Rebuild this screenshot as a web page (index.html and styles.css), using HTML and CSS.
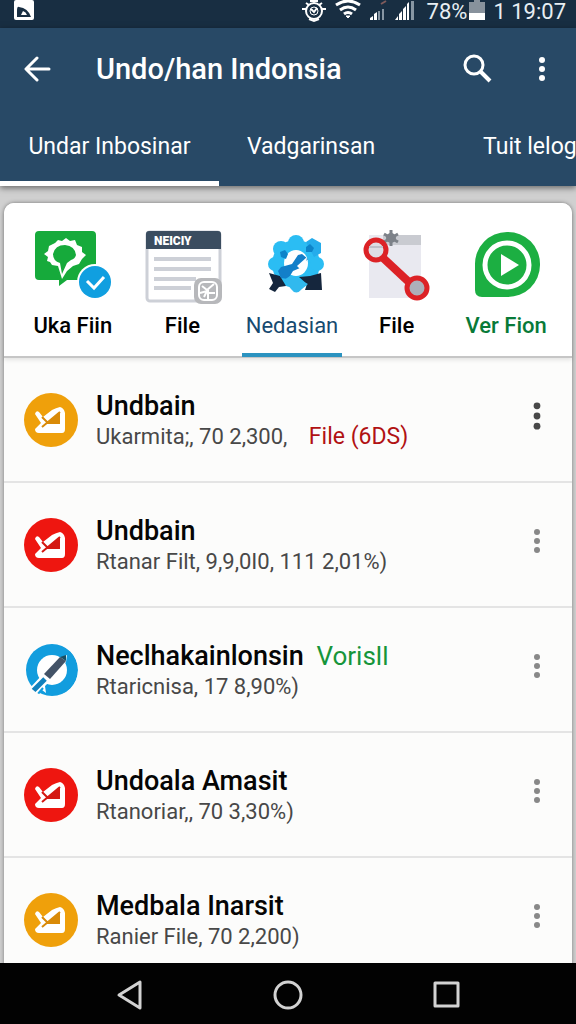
FILE: index.html
```html
<!DOCTYPE html>
<html lang="id">
<head>
    <meta charset="UTF-8">
    <meta name="viewport" content="width=device-width, initial-scale=1.0">
    <title>Undo/han Indonsia</title>
    <link rel="stylesheet" href="styles.css">
</head>
<body>

<!-- Shared icon shapes -->
<svg class="symbols" aria-hidden="true">
    <symbol id="mark" viewBox="0 0 54 54">
        <path d="M11 21 Q12 17 15 19 L19 24 L28 17 Q32 15 36 14 Q40 15 41 20 V36 Q41 40 38 40 H15 Q11 40 11 36 L17 30Z" fill="#fff"/>
        <path d="M36 19 V31 H22Z" fill="currentColor"/>
        <path d="M36 19 L18 34 M18 24 L23 29" fill="none" stroke="currentColor" stroke-width="2"/>
    </symbol>
    <symbol id="dots" viewBox="0 0 10 30">
        <circle cx="5" cy="6" r="3"/>
        <circle cx="5" cy="15" r="3"/>
        <circle cx="5" cy="24" r="3"/>
    </symbol>
</svg>

<div class="status-bar">
    <svg width="20" height="20" viewBox="0 0 20 20">
        <rect width="20" height="20" rx="2" fill="#fff"/>
        <path d="M3 17 V11 Q3 6 5 7 Q14 8 17 17Z" fill="#182e42"/>
        <path d="M7 15 L9 11 Q12 12 13 15Z" fill="#fff"/>
    </svg>
    <div class="status-right">
        <svg width="26" height="24" viewBox="0 0 26 24" fill="none" stroke="#fff" stroke-width="2">
            <circle cx="13" cy="11" r="8"/>
            <circle cx="13" cy="11" r="4" stroke-width="1"/>
            <path d="M5 3 L8 5 M21 3 L18 5 M1 9 H5 M21 9 H25 M9 1 H17 M8 19 L13 21 L18 19 M10 9 L13 12 L16 8"/>
        </svg>
        <svg width="26" height="20" viewBox="0 0 26 20" fill="none" stroke="#fff" stroke-width="3">
            <path d="M1 5 Q13 -3 25 5"/>
            <path d="M5 10 Q13 4 21 10"/>
            <path d="M9 14 Q13 11 17 14"/>
            <path d="M11 16 L13 18 L15 16Z" fill="#fff" stroke-width="1"/>
        </svg>
        <svg width="18" height="22" viewBox="0 0 18 22" fill="#fff">
            <path d="M1 20 V18 L4 16 V20Z M5 20 V14 L8 12 V20Z"/>
            <path d="M9 20 V11 H11 V20Z M13 20 V9 H15 V20Z" fill="#8796a3"/>
            <path d="M12 4 L17 1" stroke="#815b5b" stroke-width="2"/>
        </svg>
        <svg width="20" height="22" viewBox="0 0 20 22" fill="#fff">
            <path d="M0 20 L3 16 V20Z M4 20 V14 L7 11 V20Z M8 20 V9 L11 6 V20Z M12 20 V4 L14 2 V20Z"/>
            <path d="M16 1 H19 V20 H16Z" fill="#8796a3"/>
        </svg>
        <span class="battery-text">78%</span>
        <svg width="16" height="20" viewBox="0 0 16 20">
            <path d="M5 0 H11 V2 H16 V20 H0 V2 H5Z" fill="#88929c"/>
            <path d="M0 13 H16 V20 H0Z" fill="#fff"/>
        </svg>
        <span>1 19:07</span>
    </div>
</div>

<header class="header">
    <div class="app-bar">
        <button class="icon-btn" aria-label="Back">
            <svg width="28" height="28" viewBox="0 0 28 28" fill="none" stroke="#fff" stroke-width="3" stroke-linecap="round" stroke-linejoin="round">
                <path d="M25 14 H3 M13 3 L2 14 L13 25"/>
            </svg>
        </button>
        <h1>Undo/han Indonsia</h1>
        <button class="icon-btn" aria-label="Search">
            <svg width="30" height="30" viewBox="0 0 30 30" fill="none" stroke="#fff" stroke-width="3">
                <circle cx="11" cy="11" r="9"/>
                <path d="M17 17 L27 27" stroke-width="4"/>
            </svg>
        </button>
        <button class="icon-btn" aria-label="More">
            <svg width="10" height="30" fill="#fff"><use href="#dots"/></svg>
        </button>
    </div>
    <nav class="tabs">
        <button class="tab active">Undar Inbosinar</button>
        <button class="tab">Vadgarinsan</button>
        <button class="tab last">Tuit lelog</button>
    </nav>
</header>

<main>
    <div class="card">
        <nav class="shortcuts">
            <button class="shortcut">
                <svg width="80" height="80" viewBox="0 0 80 80">
                    <path d="M6 3 H59 Q63 3 63 7 V48 Q63 52 59 52 H34 L26 58 V52 H6 Q2 52 2 48 V7 Q2 3 6 3Z" fill="#16aa3b"/>
                    <path d="M22 15 L25 12 L29 13 L33 10 L37 13 L42 12 L44 17 L49 19 L49 24 L53 27 L49 31 L46 36 L40 38 L34 43 L29 51 L25 38 L19 37 L17 34 L14 33 L15 29 L11 26 L15 23 L16 18Z" fill="#fff"/>
                    <path d="M20 26 Q22 17 32 17 Q42 18 43 27 Q42 31 38 32 L34 35 L29 46 L27 35 Q20 33 20 26Z" fill="#16aa3b"/>
                    <circle cx="62" cy="54" r="18" fill="#fff"/>
                    <circle cx="62" cy="54" r="16" fill="#109fe0"/>
                    <path d="M54 53 L61 60 L71 49" fill="none" stroke="#fff" stroke-width="3"/>
                </svg>
                <span>Uka Fiin</span>
            </button>
            <button class="shortcut">
                <svg width="80" height="80" viewBox="0 0 80 80">
                    <rect x="5" y="4" width="73" height="69" rx="3" fill="#fff" stroke="#cdd0d7" stroke-width="3"/>
                    <path d="M7 3 H76 Q79 3 79 6 V21 H4 V6 Q4 3 7 3Z" fill="#3b4d60"/>
                    <text x="12" y="17" class="paper-title">NEICIY</text>
                    <path d="M12 31 H69 M12 41 H69 M12 51 H54 M12 60 H49" stroke="#cdd0d7" stroke-width="4"/>
                    <rect x="52" y="50" width="28" height="26" rx="7" fill="#b7b8bb"/>
                    <rect x="57" y="54" width="18" height="18" rx="5" fill="#b7b8bb" stroke="#fff" stroke-width="2"/>
                    <path d="M60 58 L65 62 L72 56 M66 62 V71 M58 65 L65 63 L62 69 M67 65 H73" fill="none" stroke="#fff" stroke-width="2"/>
                </svg>
                <span>File</span>
            </button>
            <button class="shortcut selected">
                <svg width="80" height="80" viewBox="0 0 80 80">
                    <g fill="#2bbdf3">
                        <circle cx="44" cy="36" r="24"/>
                        <circle cx="44" cy="15" r="8"/>
                        <circle cx="29" cy="21" r="8"/>
                        <circle cx="59" cy="21" r="8"/>
                        <circle cx="23" cy="36" r="7"/>
                        <circle cx="65" cy="36" r="7"/>
                    </g>
                    <path d="M54 14 L60 10 L69 15 V25 L62 29Z" fill="#25aceb"/>
                    <path d="M17 45 L28 48 L34 58 L27 59 L23 64 L17 61 L21 55Z" fill="#15263d"/>
                    <path d="M69 45 L70 62 H53 L55 56 L47 49 L58 48Z" fill="#15263d"/>
                    <ellipse cx="44" cy="35" rx="12" ry="13" fill="#fff"/>
                    <path d="M28 24 L33 22 L36 26 L34 31 L29 29Z" fill="#0d84c9"/>
                    <path d="M54 19 L58 16 L62 20 L60 24 L54 24Z" fill="#0d84c9"/>
                    <path d="M46 27 L50 26 L56 31 L48 40 L41 43 L36 51 L29 50 L26 43 L29 39 L40 36Z" fill="#137fc9"/>
                    <path d="M45 38 L55 29 L54 36 L48 41Z" fill="#fff"/>
                    <path d="M32 52 L38 48 L46 51 L56 56 L50 61 Q44 68 39 61Z" fill="#31b9ee"/>
                </svg>
                <span>Nedasian</span>
            </button>
            <button class="shortcut">
                <svg width="80" height="80" viewBox="0 0 80 80">
                    <rect x="12" y="7" width="52" height="63" fill="#e9e9f0"/>
                    <rect x="26" y="7" width="38" height="10" fill="#c9cbd1"/>
                    <circle cx="34" cy="10" r="5" fill="#7d8289"/>
                    <path d="M34 2 V18 M27 6 L41 14 M41 6 L27 14" stroke="#7d8289" stroke-width="3"/>
                    <path d="M24 28 L54 56" stroke="#dc2226" stroke-width="8"/>
                    <circle cx="19" cy="22" r="10" fill="#dedee5" stroke="#dc2226" stroke-width="5"/>
                    <path d="M12 19 H26" stroke="#bfc0c9" stroke-width="2"/>
                    <circle cx="60" cy="60" r="10" fill="#adb0ba" stroke="#dc2226" stroke-width="5"/>
                </svg>
                <span>File</span>
            </button>
            <button class="shortcut green">
                <svg width="80" height="80" viewBox="0 0 80 80">
                    <path d="M41 4 A32 32 0 0 1 74 37 A32 32 0 0 1 41 69 H16 Q9 69 9 62 V37 A32 32 0 0 1 41 4Z" fill="#1caf42"/>
                    <circle cx="41" cy="37" r="22" fill="none" stroke="#fff" stroke-width="5"/>
                    <path d="M35 26 L53 37 L35 48Z" fill="#fff"/>
                </svg>
                <span>Ver Fion</span>
            </button>
        </nav>

        <ul class="list">
            <li class="row">
                <svg class="avatar orange"><use href="#mark"/></svg>
                <div class="info">
                    <h2>Undbain</h2>
                    <p>Ukarmita;, 70 2,300, <span class="red-text">File (6DS)</span></p>
                </div>
                <button class="more dark" aria-label="More"><svg width="12" height="34"><use href="#dots"/></svg></button>
            </li>
            <li class="row">
                <svg class="avatar red"><use href="#mark"/></svg>
                <div class="info">
                    <h2>Undbain</h2>
                    <p>Rtanar Filt, 9,9,0I0, 111 2,01%)</p>
                </div>
                <button class="more" aria-label="More"><svg width="10" height="30"><use href="#dots"/></svg></button>
            </li>
            <li class="row">
                <svg class="avatar" viewBox="0 0 54 54">
                    <circle cx="28" cy="27" r="26" fill="#129dde"/>
                    <circle cx="28" cy="27" r="15" fill="#fff"/>
                    <path d="M5 46 L18 32 L26 38 L21 43 L22 50 L18 47 L12 54Z" fill="#fff"/>
                    <path d="M8 49 L21 36" stroke="#1281bd" stroke-width="5"/>
                    <path d="M13 52 L19 45" stroke="#129dde" stroke-width="2"/>
                    <path d="M20 32 L36 15 L43 12 L42 19 L25 37Z" fill="#fff"/>
                    <path d="M20 31 L36 14 L42 18 L26 36Z" fill="#435367"/>
                    <path d="M36 14 L42 12 L42 18Z" fill="#174d63"/>
                </svg>
                <div class="info">
                    <h2>Neclhakainlonsin <span class="tag">Vorisll</span></h2>
                    <p>Rtaricnisa, 17 8,90%)</p>
                </div>
                <button class="more" aria-label="More"><svg width="10" height="30"><use href="#dots"/></svg></button>
            </li>
            <li class="row">
                <svg class="avatar red"><use href="#mark"/></svg>
                <div class="info">
                    <h2>Undoala Amasit</h2>
                    <p>Rtanoriar,, 70 3,30%)</p>
                </div>
                <button class="more" aria-label="More"><svg width="10" height="30"><use href="#dots"/></svg></button>
            </li>
            <li class="row">
                <svg class="avatar orange"><use href="#mark"/></svg>
                <div class="info">
                    <h2>Medbala Inarsit</h2>
                    <p>Ranier File, 70 2,200)</p>
                </div>
                <button class="more" aria-label="More"><svg width="10" height="30"><use href="#dots"/></svg></button>
            </li>
        </ul>
    </div>
</main>

<!-- Android navigation buttons -->
<footer class="nav-bar">
    <button aria-label="Back">
        <svg width="30" height="32" viewBox="0 0 30 32"><path d="M25 4 V30 L4 17Z"/></svg>
    </button>
    <button aria-label="Home">
        <svg width="30" height="32" viewBox="0 0 30 32"><circle cx="15" cy="17" r="13"/></svg>
    </button>
    <button aria-label="Recent">
        <svg width="30" height="32" viewBox="0 0 30 32"><rect x="4" y="5" width="23" height="23"/></svg>
    </button>
</footer>

</body>
</html>
```
FILE: styles.css
```css
* {
    box-sizing: border-box;
}

body {
    font-family: Roboto, "Liberation Sans", sans-serif;
    margin: 0;
    height: 100vh;
    display: flex;
    flex-direction: column;
    background-color: #d0d0d0;
    overflow: hidden;
}

button {
    font: inherit;
    color: inherit;
    background: none;
    border: none;
    padding: 0;
    cursor: pointer;
}

svg {
    display: block;
    flex-shrink: 0;
}

.symbols {
    width: 0;
    height: 0;
    position: absolute;
}

/* Status bar */
.status-bar {
    flex-shrink: 0;
    display: flex;
    justify-content: space-between;
    height: 28px;
    padding: 0 10px 0 14px;
    background-color: #182e42;
    color: #e8eef3;
    font-size: 22px;
    line-height: 24px;
}

.status-right {
    display: flex;
    gap: 8px;
}

.battery-text {
    margin: 0 -6px 0 4px;
}

/* Header with title and tabs */
.header {
    flex-shrink: 0;
    background-color: #284966;
    color: white;
    box-shadow: 0 2px 6px rgba(0, 0, 0, 0.5);
}

.app-bar {
    display: flex;
    align-items: center;
    height: 82px;
    padding: 0 12px 0 16px;
}

.app-bar h1 {
    flex: 1;
    margin: 0 0 0 36px;
    font-size: 29px;
    line-height: 36px;
    font-weight: 500;
    white-space: nowrap;
}

.icon-btn {
    display: flex;
    justify-content: center;
    align-items: center;
    min-width: 44px;
    height: 44px;
}

.icon-btn + .icon-btn {
    margin-left: 20px;
}

.tabs {
    display: flex;
    height: 76px;
    overflow: hidden;
}

.tab {
    flex: 0 0 32%;
    padding-top: 2px;
    border-bottom: 5px solid transparent;
    font-size: 23px;
    line-height: 28px;
    white-space: nowrap;
}

.tab.active {
    flex-basis: 38%;
    border-bottom-color: white;
}

.tab.last {
    flex-basis: 44%;
}

/* Main card */
main {
    flex: 1;
    min-height: 0;
    padding: 17px 4px 0;
    overflow-y: auto;
    scrollbar-width: none;
}

.card {
    background-color: #fcfcfb;
    border-radius: 10px;
    box-shadow: 0 0 4px rgba(0, 0, 0, 0.4);
}

.shortcuts {
    display: grid;
    grid-template-columns: 11fr 11fr 11fr 10fr 12fr;
    height: 155px;
    padding: 25px 6px 0 14px;
    background-color: white;
    border-bottom: 2px solid #c6c6c6;
    border-radius: 10px 10px 0 0;
    box-shadow: 0 2px 4px rgba(0, 0, 0, 0.1);
}

.shortcut {
    display: flex;
    flex-direction: column;
    align-items: center;
    font-size: 22px;
    line-height: 28px;
    font-weight: 500;
    white-space: nowrap;
}

.shortcut span {
    height: 49px;
    padding-top: 4px;
}

.shortcut.selected span {
    min-width: 100px;
    border-bottom: 4px solid #2b93c0;
    color: #164a70;
    font-weight: 400;
}

.shortcut.green {
    color: #087a38;
}

.paper-title {
    font-size: 12px;
    font-weight: 900;
    fill: white;
}

/* File list */
.list {
    list-style: none;
    margin: 0;
    padding: 0;
}

.row {
    display: flex;
    align-items: center;
    height: 125px;
    padding: 0 14px 0 20px;
    border-bottom: 2px solid #e4e4e4;
}

.avatar {
    width: 54px;
    height: 54px;
    border-radius: 50%;
}

.avatar.orange {
    background-color: #efa00b;
    color: #d98a08;
}

.avatar.red {
    background-color: #ee1610;
    color: #d41812;
}

.info {
    flex: 1;
    min-width: 0;
    padding: 2px 0 0 18px;
    white-space: nowrap;
}

.info h2 {
    margin: 0;
    color: #050505;
    font-size: 27px;
    line-height: 32px;
    font-weight: 500;
}

.info p {
    margin: 0;
    color: #484848;
    font-size: 22px;
    line-height: 30px;
}

.red-text {
    margin-left: 16px;
    color: #b11213;
    font-size: 23px;
}

.tag {
    margin-left: 6px;
    color: #16953a;
    font-size: 26px;
    font-weight: 400;
}

.more {
    display: flex;
    justify-content: center;
    align-items: center;
    width: 42px;
    height: 48px;
    margin-bottom: 8px;
    fill: #888;
}

.more.dark {
    fill: #484848;
}

/* Bottom bar */
.nav-bar {
    flex-shrink: 0;
    display: flex;
    justify-content: center;
    gap: 128px;
    height: 61px;
    background-color: #020202;
}

.nav-bar svg {
    fill: none;
    stroke: #d2d2d2;
    stroke-width: 3;
    stroke-linejoin: round;
}
```
